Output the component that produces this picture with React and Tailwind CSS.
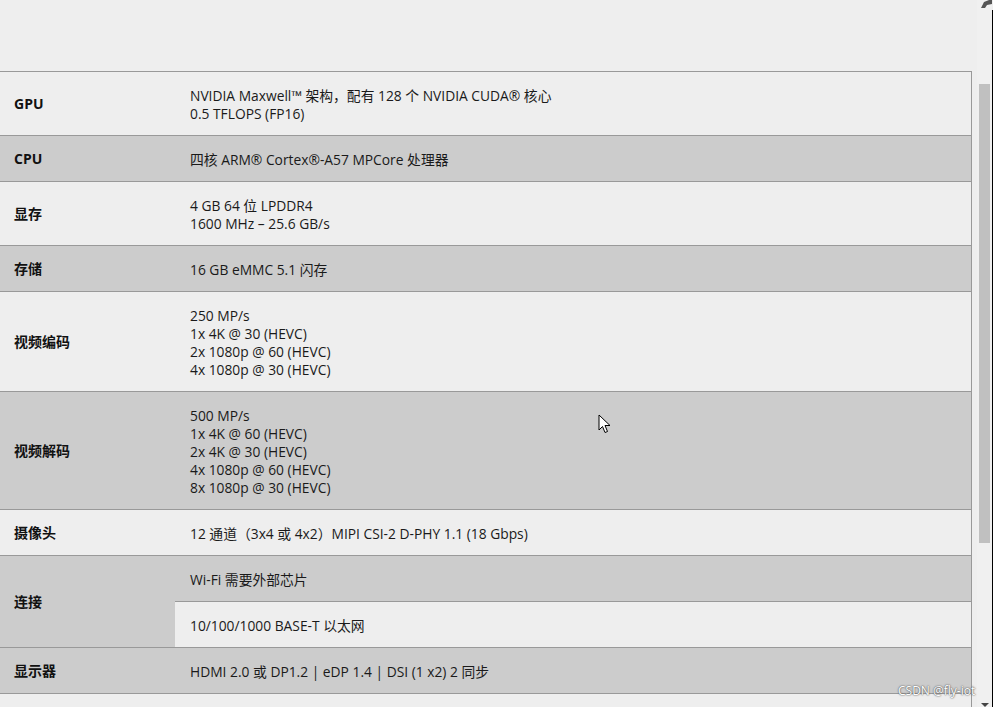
import React from 'react';

const rows = [
  { label: 'GPU', lines: ['NVIDIA Maxwell™ 架构，配有 128 个 NVIDIA CUDA® 核心', '0.5 TFLOPS (FP16)'] },
  { label: 'CPU', lines: ['四核 ARM® Cortex®-A57 MPCore 处理器'] },
  { label: '显存', lines: ['4 GB 64 位 LPDDR4', '1600 MHz – 25.6 GB/s'] },
  { label: '存储', lines: ['16 GB eMMC 5.1 闪存'] },
  { label: '视频编码', lines: ['250 MP/s', '1x 4K @ 30 (HEVC)', '2x 1080p @ 60 (HEVC)', '4x 1080p @ 30 (HEVC)'] },
  { label: '视频解码', lines: ['500 MP/s', '1x 4K @ 60 (HEVC)', '2x 4K @ 30 (HEVC)', '4x 1080p @ 60 (HEVC)', '8x 1080p @ 30 (HEVC)'] },
  { label: '摄像头', lines: ['12 通道（3x4 或 4x2）MIPI CSI-2 D-PHY 1.1 (18 Gbps)'] },
];

const font = { fontFamily: '"Open Sans", "Noto Sans CJK SC", sans-serif' };

function Row({ label, lines, dark }) {
  return (
    <div className={`flex border-t border-[#999999] ${dark ? 'bg-[#cccccc]' : 'bg-[#eeeeee]'}`}>
      <div className="w-[175px] shrink-0 flex items-center pl-[14px] text-[14px] font-bold text-[#111111]">{label}</div>
      <div className="flex-1 pl-[15px] pt-[15px] pb-[12px] text-[13.8px] leading-[18px] text-[#1a1a1a]">
        {lines.map((l) => (
          <div key={l}>{l}</div>
        ))}
      </div>
    </div>
  );
}

export default function App() {
  return (
    <div className="relative w-[993px] h-[707px] overflow-hidden bg-[#eeeeee] flex" style={font}>
      {/* Spec table */}
      <div className="w-[972px] shrink-0 pt-[71px]">
        <div className="border-r border-[#999999]">
          {rows.map((r, i) => (
            <Row key={r.label} label={r.label} lines={r.lines} dark={i % 2 === 1} />
          ))}

          {/* Connectivity */}
          <div className="flex border-t border-[#999999] bg-[#cccccc]">
            <div className="w-[175px] shrink-0 flex items-center pl-[14px] text-[14px] font-bold text-[#111111]">连接</div>
            <div className="flex-1 text-[13.8px] leading-[18px] text-[#1a1a1a]">
              <div className="pl-[15px] pt-[15px] pb-[12px]">Wi-Fi 需要外部芯片</div>
              <div className="border-t border-[#999999] bg-[#eeeeee] pl-[15px] pt-[15px] pb-[12px]">10/100/1000 BASE-T 以太网</div>
            </div>
          </div>

          <Row label="显示器" lines={['HDMI 2.0 或 DP1.2 | eDP 1.4 | DSI (1 x2) 2 同步']} dark />
          <Row label="" lines={['']} />
        </div>
      </div>

      {/* Scrollbar */}
      <div className="flex-1 flex pl-[5px]">
        <div className="w-[15px] bg-[#f0f0f0] pt-[84px] px-[2px]">
          <div className="h-[459px] bg-[#c0c0c0]" />
        </div>
        <div className="w-[1px] mt-[10px] bg-black" />
      </div>

      {/* corner glyph */}
      <svg className="absolute right-[1px] top-0" width="12" height="9" viewBox="0 0 12 9">
        <path d="M1 8 L4 2 L9 0 L12 0 L12 4 L7 5 L5 8 Z" fill="#555555" />
      </svg>
      {/* down arrow */}
      <svg className="absolute left-[981px] top-[703px]" width="8" height="4" viewBox="0 0 8 4">
        <path d="M0 0 L8 0 L4 4 Z" fill="#444444" />
      </svg>

      {/* mouse cursor */}
      <svg className="absolute left-[598px] top-[414px]" width="14" height="21" viewBox="0 0 14 21">
        <path d="M1 1 L1 16 L4.5 12.5 L7 18.5 L9.5 17.5 L7 11.5 L12 11.5 Z" fill="#ffffff" stroke="#000000" strokeWidth="1" strokeLinejoin="round" />
      </svg>

      {/* watermark */}
      <div
        className="absolute left-[898px] top-[683px] text-[12px] text-white leading-[16px]"
        style={{ textShadow: '0 0 2px #555555, 0 0 1px #555555' }}
      >
        CSDN @fly-iot
      </div>
    </div>
  );
}
